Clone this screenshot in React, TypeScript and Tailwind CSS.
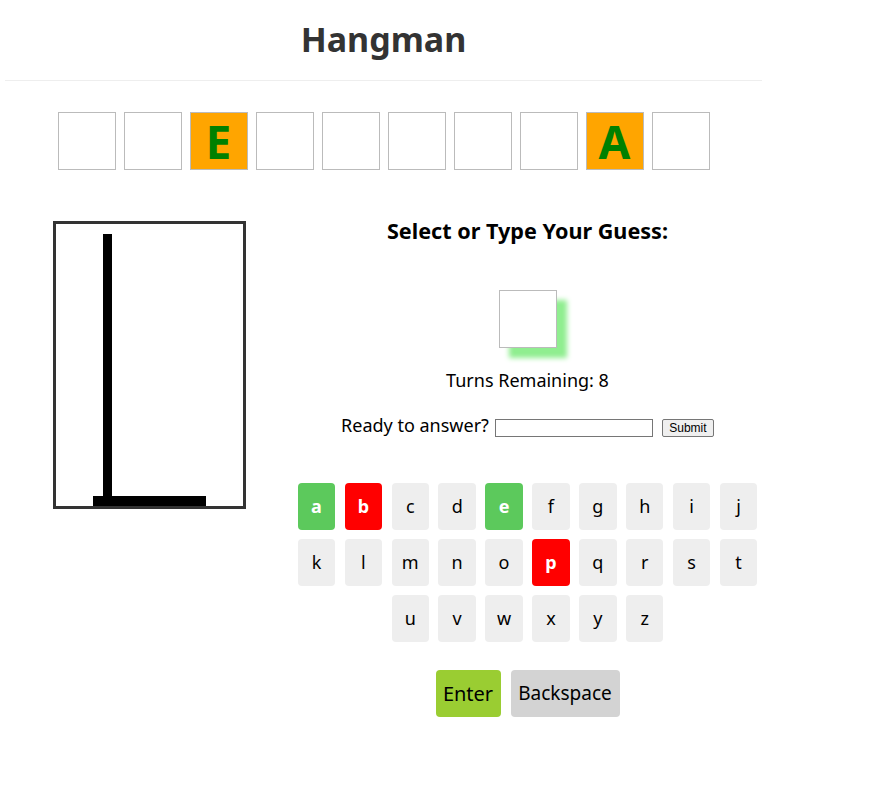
import React from "react";

const word = ["", "", "E", "", "", "", "", "", "A", ""];
const rows = [
  ["a", "b", "c", "d", "e", "f", "g", "h", "i", "j"],
  ["k", "l", "m", "n", "o", "p", "q", "r", "s", "t"],
  ["u", "v", "w", "x", "y", "z"],
];
const green = new Set(["a", "e"]);
const red = new Set(["b", "p"]);

function Key({ k }: { k: string }) {
  let cls = "bg-[#eeeeee] text-black";
  if (green.has(k)) cls = "bg-[#5cc95c] text-white font-bold";
  if (red.has(k)) cls = "bg-[#ff0000] text-white font-bold";
  return (
    <div className={`w-[37.5px] h-[47px] rounded-[4px] flex items-center justify-center text-[18px] ${cls}`}>
      {k}
    </div>
  );
}

export default function App() {
  return (
    <div className="w-[757px] ml-[5px] bg-white text-black" style={{ fontFamily: "'Noto Sans', sans-serif" }}>
      <div className="h-[81px] border-b border-[#eeeeee] flex justify-center">
        <h1 className="text-[34px] font-bold text-[#333333] leading-[36px] h-[36px] mt-[21px]">Hangman</h1>
      </div>
      <div className="flex justify-center gap-[8px] mt-[31px]">
        {word.map((l, i) => (
          <div
            key={i}
            className={`w-[58px] h-[58px] border border-[#bbbbbb] flex items-center justify-center text-[46px] font-bold text-[#008000] leading-none ${l ? "bg-[#ffa500]" : "bg-white"}`}
          >
            {l}
          </div>
        ))}
      </div>
      <div className="flex mt-[51px]">
        <div className="ml-[48px] w-[193px] h-[288px] border-[3px] border-[#333333]">
          <svg width="187" height="282" viewBox="0 0 187 282">
            <rect x="47" y="10" width="9" height="262" fill="#000" />
            <rect x="37" y="272" width="113" height="10" fill="#000" />
          </svg>
        </div>
        <div className="ml-[52px] w-[459px] flex flex-col items-center">
          <div className="text-[21.6px] font-bold leading-[20px] h-[20px]">Select or Type Your Guess:</div>
          <div className="mt-[49px] w-[58px] h-[58px] border border-[#bbbbbb] bg-white shadow-[10px_10px_5px_#90ee90]"></div>
          <div className="mt-[21px] text-[18px] leading-[22px] h-[22px]">Turns Remaining: 8</div>
          <div className="mt-[23px] flex items-start text-[18px] leading-[22px] h-[23px]">
            <span>Ready to answer?</span>
            <input className="ml-[6px] mt-[5px] w-[158px] h-[18px] border border-[#767676] bg-white" />
            <button
              className="ml-[9px] mt-[5px] w-[52px] h-[18px] border border-[#767676] bg-[#efefef] text-[12px] leading-none text-black rounded-[2px]"
              style={{ fontFamily: "'Liberation Sans', Arial, sans-serif" }}
            >
              Submit
            </button>
          </div>
          <div className="mt-[46px] flex flex-col items-center gap-[9px]">
            {rows.map((r, i) => (
              <div key={i} className="flex gap-[9.4px]">
                {r.map((k) => (
                  <Key key={k} k={k} />
                ))}
              </div>
            ))}
          </div>
          <div className="mt-[28px] flex gap-[10px]">
            <button className="w-[65px] h-[47px] rounded-[4px] bg-[#9acd32] text-[20px] text-black">Enter</button>
            <button className="w-[109px] h-[47px] rounded-[4px] bg-[#d3d3d3] text-[19px] text-black">Backspace</button>
          </div>
        </div>
      </div>
    </div>
  );
}
